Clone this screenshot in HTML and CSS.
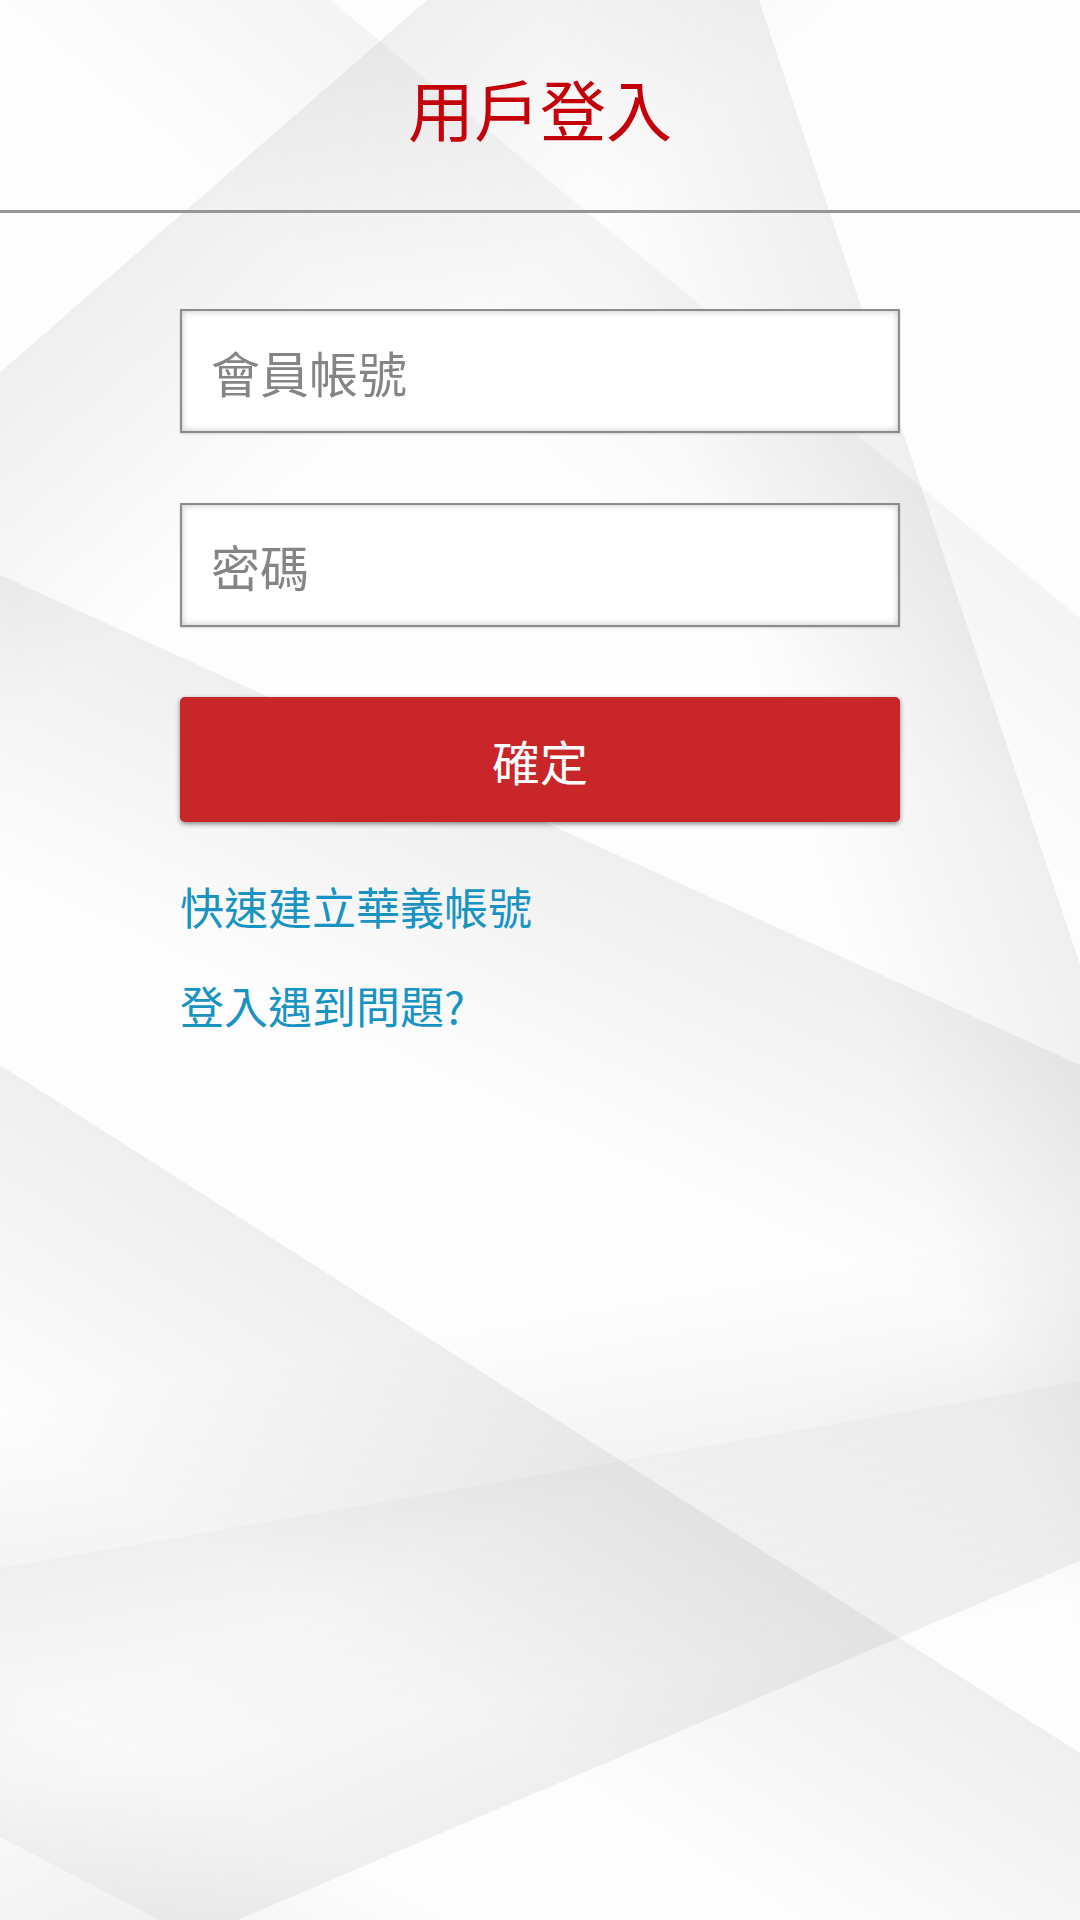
FILE: index.html
```html
<!DOCTYPE html>
<html lang="zh-Hant">
<head>
<meta charset="utf-8">
<title>用戶登入</title>
<link rel="stylesheet" href="styles.css">
</head>
<body>
<div class="page">
  <header class="header">
    <h1 class="title">用戶登入</h1>
  </header>
  <main class="form">
    <div class="field"><span class="placeholder">會員帳號</span></div>
    <div class="field"><span class="placeholder">密碼</span></div>
    <div class="button">確定</div>
    <div class="links">
      <a class="link">快速建立華義帳號</a>
      <a class="link">登入遇到問題?</a>
    </div>
  </main>
</div>
</body>
</html>
```
FILE: styles.css
```css
html, body {
  margin: 0;
  padding: 0;
}
body {
  width: 1080px;
  height: 1920px;
  overflow: hidden;
  font-family: "Noto Sans CJK TC", "Noto Sans", sans-serif;
  background-color: #fdfdfd;
  background-image: url("data:image/svg+xml;utf8,<svg xmlns='http://www.w3.org/2000/svg' width='1080' height='1920' viewBox='0 0 1080 1920'><defs><linearGradient id='g' x1='0' y1='1' x2='0' y2='0'><stop offset='0' stop-color='%23000' stop-opacity='0.055'/><stop offset='1' stop-color='%23000' stop-opacity='0'/></linearGradient><linearGradient id='h' x1='0' y1='1' x2='0' y2='0'><stop offset='0' stop-color='%23000' stop-opacity='0.035'/><stop offset='1' stop-color='%23000' stop-opacity='0'/></linearGradient></defs><rect x='-2500' y='-220' width='5000' height='220' fill='url(%23g)' transform='translate(759 0) rotate(251.6)'/><rect x='-2500' y='-280' width='5000' height='280' fill='url(%23g)' transform='translate(427 0) rotate(138.9)'/><rect x='-2500' y='-220' width='5000' height='220' fill='url(%23h)' transform='translate(330 0) rotate(219.5)'/><rect x='-2500' y='-280' width='5000' height='280' fill='url(%23g)' transform='translate(0 575) rotate(204.4)'/><rect x='-2500' y='-300' width='5000' height='300' fill='url(%23g)' transform='translate(0 1065) rotate(212.5)'/><rect x='-2500' y='-220' width='5000' height='220' fill='url(%23g)' transform='translate(0 1568) rotate(170.2)'/><rect x='-2500' y='-160' width='5000' height='160' fill='url(%23h)' transform='translate(0 1568) rotate(-9.8)'/><rect x='-2500' y='-260' width='5000' height='260' fill='url(%23g)' transform='translate(207 1933) rotate(-23.1)'/><rect x='-2500' y='-140' width='5000' height='140' fill='url(%23h)' transform='translate(0 1837) rotate(27.5)'/></svg>");
  background-repeat: no-repeat;
  background-size: 1080px 1920px;
}

.page {
  display: flex;
  flex-direction: column;
}

.header {
  height: 213px;
  box-sizing: border-box;
  border-bottom: 3px solid #979797;
  display: flex;
  align-items: center;
  justify-content: center;
  padding-top: 4px;
}
.title {
  margin: 0;
  font-size: 66px;
  font-weight: 400;
  color: #c5000b;
  line-height: 1;
}

.form {
  padding: 96px 0 0 180px;
  display: flex;
  flex-direction: column;
  width: 720px;
}

.field {
  height: 124px;
  box-sizing: border-box;
  border: 2px solid #8c8c8c;
  background: #ffffff;
  box-shadow: inset 0 0 6px rgba(0, 0, 0, 0.25), 0 1px 2px rgba(0, 0, 0, 0.15);
  display: flex;
  align-items: center;
  padding-left: 29px;
  margin-bottom: 70px;
}
.placeholder {
  font-size: 49px;
  color: #858585;
  line-height: 1;
}

.button {
  height: 125px;
  border-radius: 5px;
  background: #c9262a;
  box-shadow: 0 2px 5px rgba(0, 0, 0, 0.45);
  color: #ffffff;
  font-size: 48px;
  display: flex;
  align-items: center;
  justify-content: center;
  line-height: 1;
}

.links {
  display: flex;
  flex-direction: column;
  align-items: flex-start;
  padding-top: 54px;
  gap: 39px;
}
.link {
  font-size: 44px;
  line-height: 60px;
  color: #1893c2;
  text-decoration: none;
}
```
